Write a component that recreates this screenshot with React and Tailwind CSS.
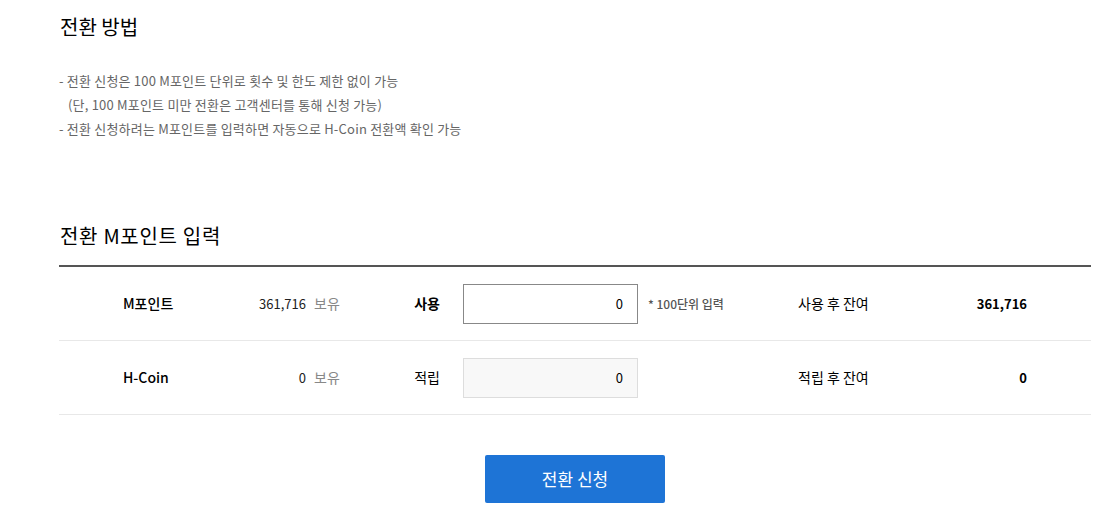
import React from "react";

const FONT = { fontFamily: '"Noto Sans CJK KR", "Noto Sans", sans-serif' };

const rows = [
  {
    name: "M포인트",
    own: "361,716",
    action: "사용",
    actionBold: true,
    editable: true,
    note: "* 100단위 입력",
    restLabel: "사용 후 잔여",
    rest: "361,716",
  },
  {
    name: "H-Coin",
    own: "0",
    action: "적립",
    actionBold: false,
    editable: false,
    note: "",
    restLabel: "적립 후 잔여",
    rest: "0",
  },
];

export default function App() {
  return (
    <div className="min-h-screen bg-white text-black pl-[59px] pt-[12px]" style={FONT}>
      <div className="w-[1032px]">
        {/* 전환 방법 */}
        <h2 className="text-[20px] leading-[30px] font-normal pl-[1px]">전환 방법</h2>
        <ul className="mt-[27px] text-[13px] leading-[24px] tracking-[0.2px] text-[#666]">
          <li>
            - 전환 신청은 100 M포인트 단위로 횟수 및 한도 제한 없이 가능
            <br />
            <span className="pl-[9px]">(단, 100 M포인트 미만 전환은 고객센터를 통해 신청 가능)</span>
          </li>
          <li>- 전환 신청하려는 M포인트를 입력하면 자동으로 H-Coin 전환액 확인 가능</li>
        </ul>

        {/* 전환 M포인트 입력 */}
        <h2 className="mt-[80px] text-[20px] leading-[30px] font-normal tracking-[0.7px] pl-[1px]">
          전환 M포인트 입력
        </h2>
        <div className="mt-[14px] border-t-2 border-[#555]">
          {rows.map((r) => (
            <div
              key={r.name}
              className="flex items-center h-[74px] border-b border-[#e8e8e8] text-[14px]"
            >
              <div className="w-[161px] pl-[64px] font-medium">{r.name}</div>
              <div className="w-[86px] text-right text-[13px] text-[#222]">{r.own}</div>
              <div className="w-[37px] pl-[8px] text-[#888]">보유</div>
              <div className={`w-[97px] text-right ${r.actionBold ? "font-bold" : ""}`}>
                {r.action}
              </div>
              <input
                readOnly
                value="0"
                className={`ml-[23px] w-[175px] h-[40px] px-[14px] text-right text-[13px] outline-none ${
                  r.editable
                    ? "border border-[#888] bg-white"
                    : "border border-[#ddd] bg-[#f8f8f8]"
                }`}
                style={FONT}
              />
              <div className="w-[160px] pl-[10px] text-[12px] font-medium text-[#555]">
                {r.note}
              </div>
              <div className="w-[106px]">{r.restLabel}</div>
              <div className="w-[123px] text-right text-[13px] font-bold">{r.rest}</div>
            </div>
          ))}
        </div>

        <div className="flex justify-center mt-[40px]">
          <button className="w-[180px] h-[48px] rounded-[2px] bg-[#1e74d6] text-white text-[17px]">
            전환 신청
          </button>
        </div>
      </div>
    </div>
  );
}
